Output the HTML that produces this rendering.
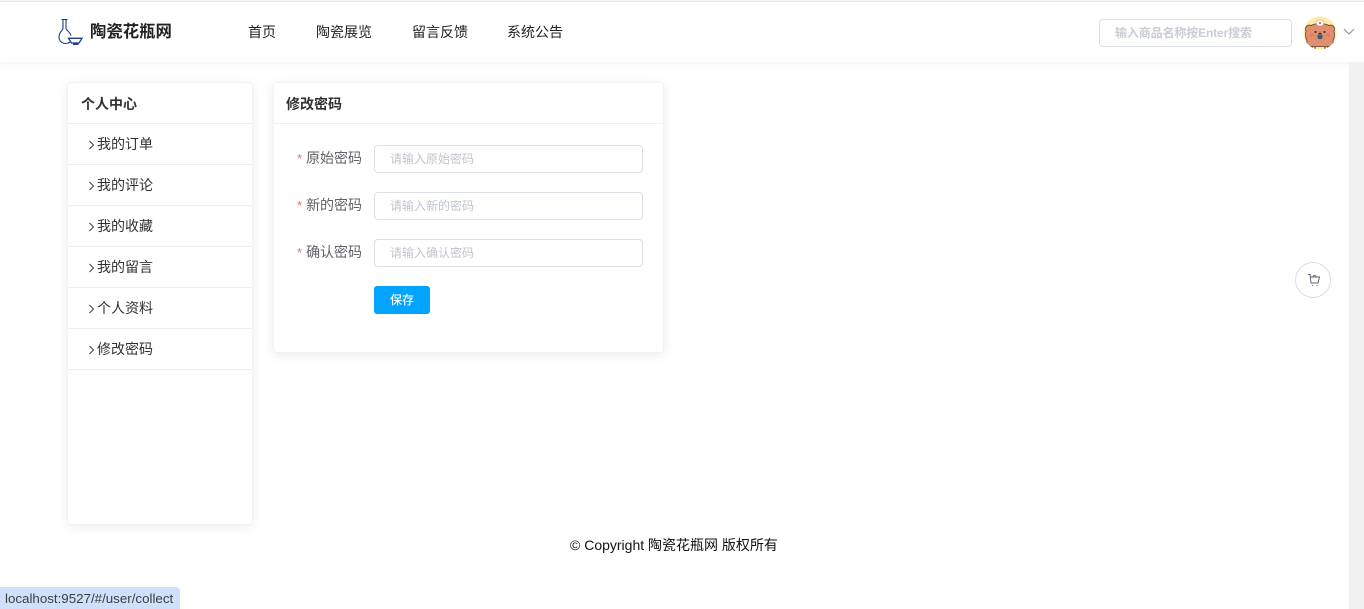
<!DOCTYPE html>
<html lang="zh">
<head>
<meta charset="utf-8">
<title>陶瓷花瓶网</title>
<style>
*{box-sizing:border-box;margin:0;padding:0}
html,body{width:1364px;height:609px;overflow:hidden;background:#fff}
body{position:relative;font-family:"Liberation Sans","Noto Sans CJK SC",sans-serif;font-size:14px;color:#303133}
.abs{position:absolute;white-space:nowrap}
.top{position:absolute;left:0;top:0;width:1364px;height:2px;background:#e8e8e8;border-top:1px solid #f6f6f6}
.hdr{position:absolute;left:0;top:2px;width:1364px;height:60px;background:#fff;box-shadow:0 2px 6px rgba(0,0,0,.05)}
.sb{position:absolute;left:1349px;top:62px;width:15px;height:547px;background:#f1f1f1}
.nav{top:22px;line-height:20px;font-size:14px;color:#222}
.search{position:absolute;left:1099px;top:19px;width:193px;height:28px;border:1px solid #dcdfe6;border-radius:4px;background:#fff;font-size:12px;font-weight:700;color:#c9ccd3;line-height:26px;padding-left:15px;white-space:nowrap;letter-spacing:-.13px}
.card{position:absolute;background:#fff;border:1px solid #f0f2f7;border-radius:4px;box-shadow:0 2px 12px rgba(0,0,0,.08)}
.side{left:67px;top:82px;width:186px;height:443px}
.main{left:273px;top:82px;width:391px;height:271px}
.ch{height:41px;border-bottom:1px solid #ebeef5;font-size:14px;font-weight:700;line-height:42px;padding-left:13px;color:#303133}
.row{position:relative;height:41px;border-bottom:1px solid #ebeef5;font-size:14px;line-height:40px;padding-left:29px;color:#303133}
.row svg{position:absolute;left:20px;top:16px}
.lab{left:297px;font-size:14px;line-height:20px;color:#606266}
.lab b{font-weight:400;color:#f56c6c;margin-right:4px;font-size:13px}
.inp{position:absolute;left:374px;width:269px;height:28px;border:1px solid #dcdfe6;border-radius:4px;background:#fff;font-size:12px;line-height:26px;padding-left:15px;color:#c0c4cc}
.btn{position:absolute;left:374px;top:286px;width:56px;height:28px;background:#00a4ff;border-radius:3px;color:#fff;font-size:12px;line-height:28px;text-align:center;text-shadow:0 0 .4px #fff}
.cart{position:absolute;left:1295px;top:262px;width:36px;height:36px;border:1px solid #dcdfe6;border-radius:50%;background:#fff}
.status{position:absolute;left:0;top:587px;width:180px;height:22px;background:#cfe0fb;border-top-right-radius:4px;font-size:13.33px;line-height:23px;padding-left:5px;color:#3c4043;white-space:nowrap}
</style>
</head>
<body>
<div class="hdr"></div>
<div class="top"></div>
<div class="sb"></div>

<svg class="abs" style="left:58px;top:18px" width="26" height="28" viewBox="0 0 26 28" fill="none" stroke="#1f3a8a" stroke-width="1.1">
<path d="M3.500 1.500H9.500M5 1.500V10.500C5 12 1 14 1 19C1 23 4 25.500 7.500 25.500C9.500 25.500 11 25 12.500 24"/>
<path d="M8 1.500V10.500C8 12 11.500 13.500 13 17.500"/>
<path d="M10.500 20.300H24L21 25H13.500ZM15 26.300H20.500" stroke-width="1.300"/>
</svg>
<div class="abs" style="left:90px;top:21px;font-size:16.4px;font-weight:700;line-height:23px;color:#222">陶瓷花瓶网</div>

<div class="abs nav" style="left:248px">首页</div>
<div class="abs nav" style="left:316px">陶瓷展览</div>
<div class="abs nav" style="left:412px">留言反馈</div>
<div class="abs nav" style="left:507px">系统公告</div>

<div class="search">输入商品名称按Enter搜索</div>

<svg class="abs" style="left:1303px;top:16px" width="34" height="34" viewBox="0 0 34 34">
<defs><clipPath id="c"><circle cx="17" cy="17" r="16.500"/></clipPath></defs>
<circle cx="17" cy="17" r="16.500" fill="#fdeba6"/>
<g clip-path="url(#c)">
<path d="M3 15C1.500 11 4.500 8 8 9.500C12 7 22 7 26 9.500C29.500 8 32.500 11 31 15C32 19 31.500 22 30 25C30.500 27 30 29.500 28 30.500L6 30.500C4 29.500 3.500 27 4 25C2.500 22 2 19 3 15Z" fill="#e08f6e" stroke="#5f3a2b" stroke-width=".8"/>
<path d="M9 30.500L9.500 32.500M12 31V33M22 31V33M25 30.500L24.500 32.500" stroke="#2e2420" stroke-width="1"/>
</g>
<ellipse cx="17" cy="7" rx="4" ry="3" fill="#fff" stroke="#c7998a" stroke-width=".6"/>
<circle cx="17" cy="7" r="1.100" fill="#dd5a4e"/>
<circle cx="12.500" cy="16" r="1" fill="#2c2020"/>
<circle cx="21.500" cy="16" r="1" fill="#2c2020"/>
<rect x="14.500" y="18.500" width="5" height="4.500" rx="1" fill="#35606e"/>
<path d="M15.500 17.500H18.500" stroke="#2c2020" stroke-width="1.200"/>
<ellipse cx="9" cy="19.500" rx="2" ry="1.200" fill="#ea7464"/>
<ellipse cx="25" cy="19.500" rx="2" ry="1.200" fill="#ea7464"/>
</svg>
<svg class="abs" style="left:1343px;top:28px" width="12" height="8" viewBox="0 0 12 8" fill="none" stroke="#8f9399" stroke-width="1.100"><path d="M1 1L6 6L11 1"/></svg>

<div class="card side">
  <div class="ch">个人中心</div>
  <div class="row"><svg width="8" height="10" viewBox="0 0 8 10" fill="none" stroke="#303133" stroke-width=".9"><path d="M1.500 1L5.500 5L1.500 9"/></svg>我的订单</div>
  <div class="row"><svg width="8" height="10" viewBox="0 0 8 10" fill="none" stroke="#303133" stroke-width=".9"><path d="M1.500 1L5.500 5L1.500 9"/></svg>我的评论</div>
  <div class="row"><svg width="8" height="10" viewBox="0 0 8 10" fill="none" stroke="#303133" stroke-width=".9"><path d="M1.500 1L5.500 5L1.500 9"/></svg>我的收藏</div>
  <div class="row"><svg width="8" height="10" viewBox="0 0 8 10" fill="none" stroke="#303133" stroke-width=".9"><path d="M1.500 1L5.500 5L1.500 9"/></svg>我的留言</div>
  <div class="row"><svg width="8" height="10" viewBox="0 0 8 10" fill="none" stroke="#303133" stroke-width=".9"><path d="M1.500 1L5.500 5L1.500 9"/></svg>个人资料</div>
  <div class="row"><svg width="8" height="10" viewBox="0 0 8 10" fill="none" stroke="#303133" stroke-width=".9"><path d="M1.500 1L5.500 5L1.500 9"/></svg>修改密码</div>
</div>

<div class="card main">
  <div class="ch" style="padding-left:12px">修改密码</div>
</div>

<div class="abs lab" style="top:148px"><b>*</b>原始密码</div>
<div class="inp" style="top:145px">请输入原始密码</div>
<div class="abs lab" style="top:195px"><b>*</b>新的密码</div>
<div class="inp" style="top:192px">请输入新的密码</div>
<div class="abs lab" style="top:242px"><b>*</b>确认密码</div>
<div class="inp" style="top:239px">请输入确认密码</div>
<div class="btn">保存</div>

<div class="cart">
<svg style="position:absolute;left:11px;top:10px" width="14" height="14" viewBox="0 0 14 14" fill="none" stroke="#5f6670" stroke-width="1">
<path d="M1 1.500H3L4 10H11L12.500 4H3.300"/>
<path d="M6 4C6 2 9 2 9 4"/>
<path d="M5 12.500H6M9.500 12.500H10.500"/>
</svg>
</div>

<div class="abs" style="left:570px;top:536px;font-size:14px;line-height:19px;color:#111">© Copyright 陶瓷花瓶网 版权所有</div>

<div class="status">localhost:9527/#/user/collect</div>
</body>
</html>
